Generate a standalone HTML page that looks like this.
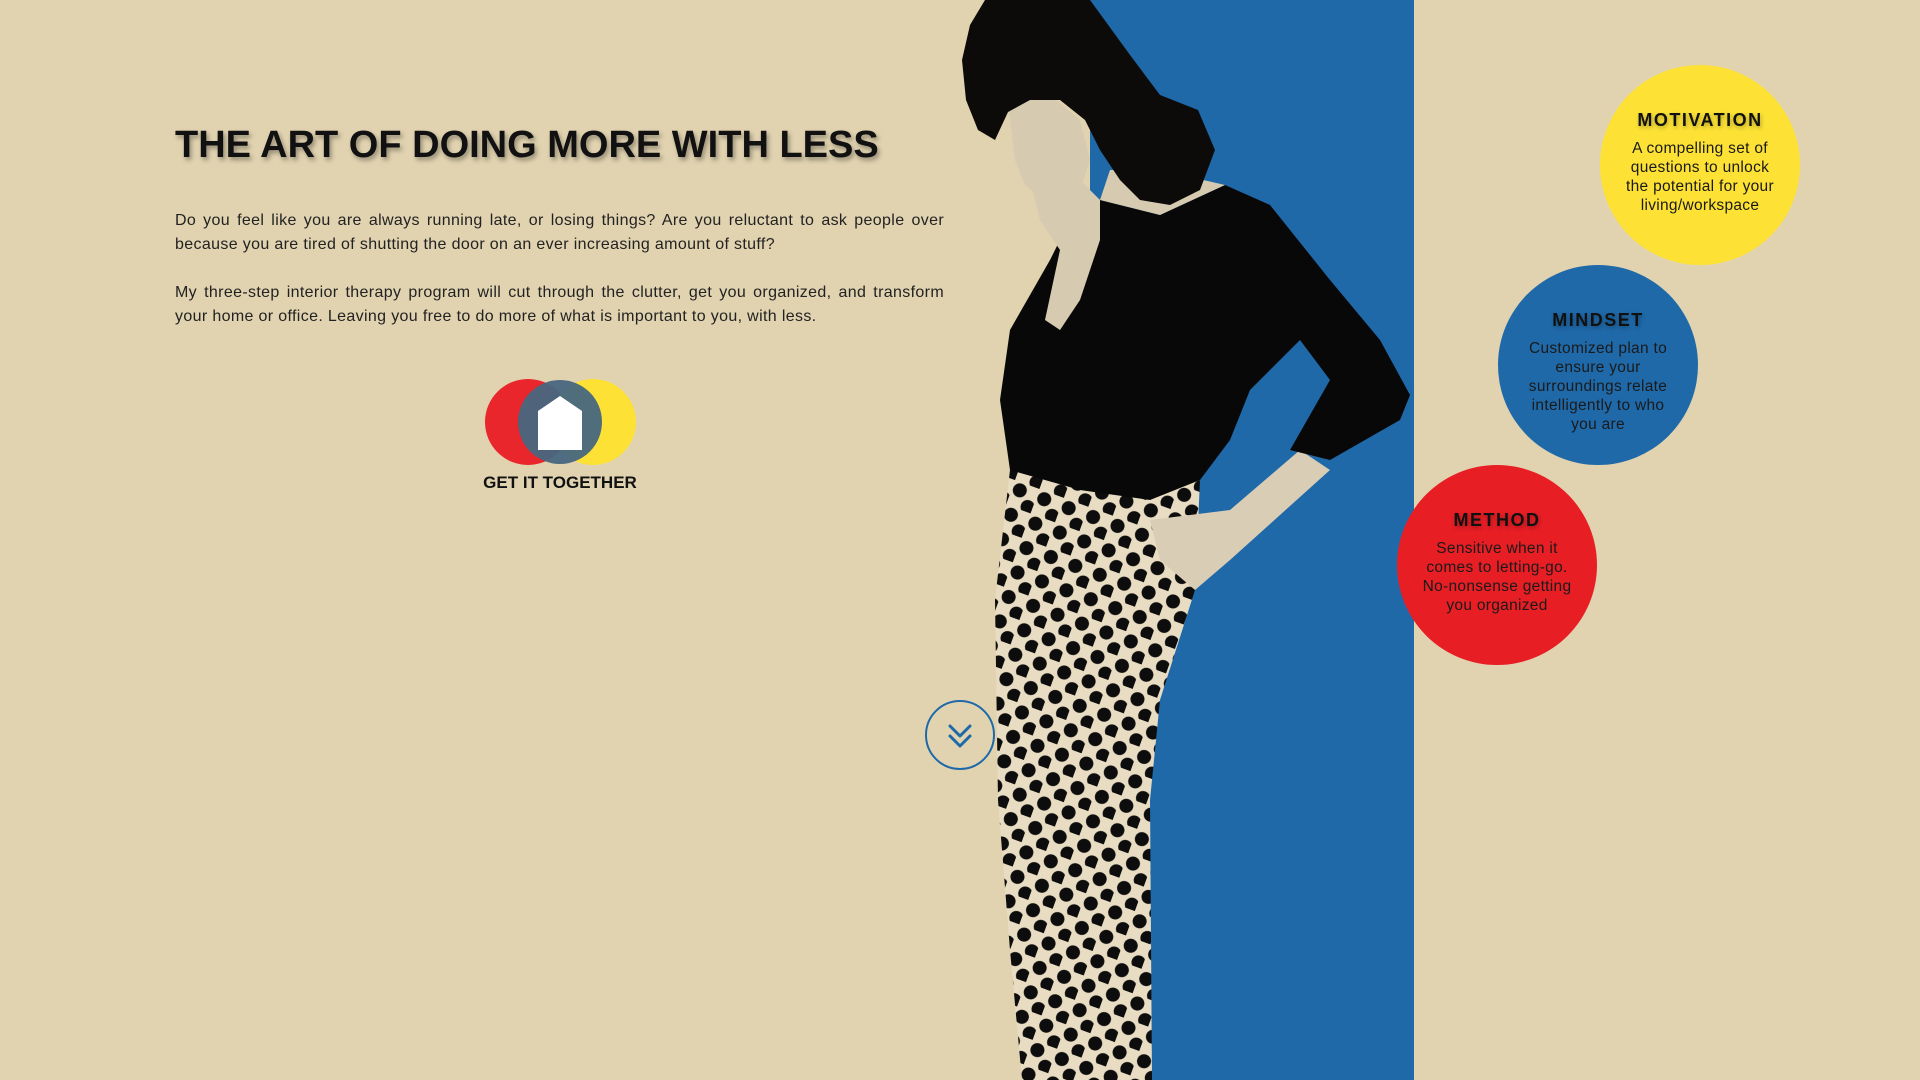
<!DOCTYPE html>
<html><head><meta charset="utf-8"><style>
html,body{margin:0;padding:0;width:1920px;height:1080px;overflow:hidden;background:#e1d3b0;font-family:"Liberation Sans",sans-serif;color:#1a1a1a}
.abs{position:absolute}
h1{position:absolute;left:175px;top:124px;margin:0;font-size:38px;font-weight:bold;letter-spacing:0px;color:#111;text-shadow:2px 3px 5px rgba(0,0,0,0.35);white-space:nowrap}
.p{position:absolute;left:175px;width:769px;font-size:16px;line-height:24px;text-align:justify;color:#222;letter-spacing:0.35px}
.circ{position:absolute;width:200px;height:200px;border-radius:50%;text-align:center;box-sizing:border-box;padding:0 24px}
.circ b{display:block;font-size:18px;letter-spacing:1.5px;margin-top:45px;margin-bottom:8px;color:#111;text-shadow:1px 2px 4px rgba(0,0,0,0.3)}
.circ span{display:block;font-size:15.5px;line-height:19px;color:#1a1a1a;letter-spacing:0.3px}
</style></head><body>
<svg class="abs" style="left:0;top:0" width="1920" height="1080">
<defs>
<pattern id="dots" width="26" height="26" patternUnits="userSpaceOnUse" patternTransform="rotate(20)">
<rect width="26" height="26" fill="#e8dcc2"/>
<circle cx="8" cy="8" r="7" fill="#0d0d0d"/>
<circle cx="21" cy="21" r="7" fill="#0d0d0d"/>
</pattern>
</defs>
<rect x="1090" y="0" width="324" height="1080" fill="#1f69a9"/>
<!-- skirt -->
<path d="M1010,470 L1200,480 L1195,590 L1160,700 L1150,800 L1152,1080 L1022,1080 L1010,950 L998,800 L995,600 Z" fill="url(#dots)"/>
<!-- back arm skin / hand on hip -->
<path d="M1150,520 L1230,510 L1300,450 L1330,470 L1230,560 L1195,590 L1160,560 Z" fill="#d9cdb5"/>
<!-- sweater -->
<path d="M1100,200 L1160,215 L1225,185 L1270,205 L1330,280 L1380,340 L1410,395 L1400,420 L1330,460 L1290,450 L1330,380 L1300,340 L1250,390 L1230,440 L1200,480 L1150,500 L1080,490 L1010,470 L1000,400 L1010,330 L1050,260 L1070,220 Z" fill="#080808"/>
<!-- neck -->
<path d="M1110,170 L1160,170 L1225,185 L1160,215 L1100,200 Z" fill="#d6cab0"/>
<!-- face -->
<path d="M1008,105 L1050,95 L1080,120 L1090,160 L1078,195 L1045,200 L1025,185 L1015,160 Z" fill="#d6cab0"/>
<!-- hand/arm near face -->
<path d="M1030,180 L1075,175 L1100,200 L1100,240 L1080,300 L1060,330 L1045,320 L1060,250 L1040,220 Z" fill="#d6cab0"/>
<!-- hair -->
<path d="M985,0 L1090,0 L1130,55 L1160,95 L1198,110 L1215,150 L1200,190 L1170,205 L1140,200 L1120,180 L1100,150 L1085,120 L1060,100 L1030,100 L1008,112 L995,140 L978,130 L966,100 L962,60 L970,25 Z" fill="#0c0b0a"/>
<!-- chevron -->
<circle cx="960" cy="735" r="34" fill="none" stroke="#1f69a9" stroke-width="2"/>
<path d="M950,726 L960,736 L970,726 M950,736 L960,746 L970,736" fill="none" stroke="#1f69a9" stroke-width="3" stroke-linecap="round" stroke-linejoin="round"/>
<!-- logo -->
<circle cx="528" cy="422" r="43" fill="#e8262b"/>
<circle cx="593" cy="422" r="43" fill="#fde235"/>
<circle cx="560" cy="422" r="42" fill="#47667f" opacity="0.95"/>
<path d="M538,411 L560,396 L582,411 L582,450 L538,450 Z" fill="#fff"/>
</svg>
<h1>THE ART OF DOING MORE WITH LESS</h1>
<div class="p" style="top:209px">Do you feel like you are always running late, or losing things? Are you reluctant to ask people over because you are tired of shutting the door on an ever increasing amount of stuff?</div>
<div class="p" style="top:281px">My three-step interior therapy program will cut through the clutter, get you organized, and transform your home or office. Leaving you free to do more of what is important to you, with less.</div>
<div class="abs" style="left:460px;top:473px;width:200px;text-align:center;font-size:17px;font-weight:bold;color:#111">GET IT TOGETHER</div>
<div class="circ" style="left:1600px;top:65px;background:#fde235"><b>MOTIVATION</b><span>A compelling set of questions to unlock the potential for your living/workspace</span></div>
<div class="circ" style="left:1498px;top:265px;background:#1f69a9"><b>MINDSET</b><span>Customized plan to ensure your surroundings relate intelligently to who you are</span></div>
<div class="circ" style="left:1397px;top:465px;background:#e81e25"><b>METHOD</b><span>Sensitive when it comes to letting-go. No-nonsense getting you organized</span></div>
</body></html>
